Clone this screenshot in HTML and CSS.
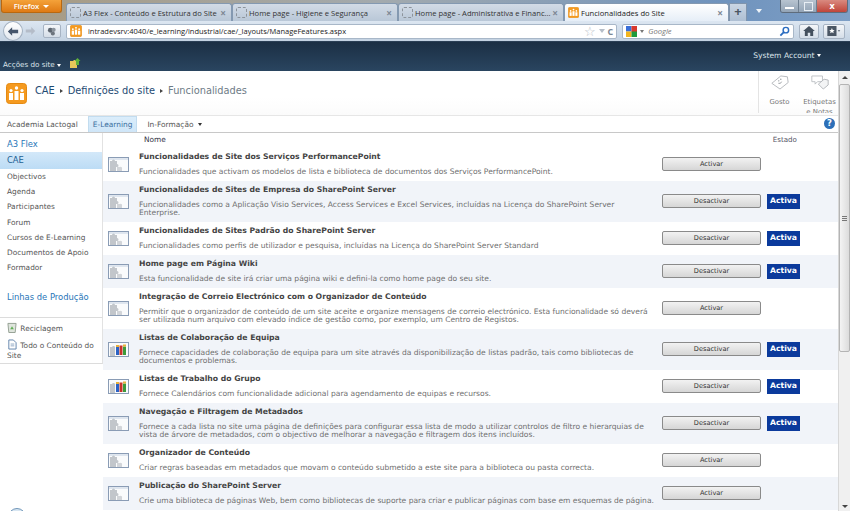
FILE: index.html
```html
<!DOCTYPE html>
<html lang="pt">

<head>
    <meta charset="UTF-8">
    <title>Funcionalidades do Site</title>
    <link rel="stylesheet" href="styles.css">
</head>

<body>
    <svg class="defs" width="0" height="0">
        <symbol id="site-logo" viewBox="0 0 21 21">
            <rect x="0.5" y="0.5" width="20" height="20" rx="3" fill="#f59a1f" stroke="#e58a12" />
            <rect x="3" y="10" width="4" height="7" fill="#fff" />
            <rect x="8.5" y="8" width="4" height="9" fill="#fff" />
            <rect x="14" y="10" width="4" height="7" fill="#fff" />
            <circle cx="5" cy="7.5" r="1.6" fill="#fff" />
            <circle cx="10.5" cy="5" r="1.7" fill="#fff" />
            <circle cx="16" cy="7.5" r="1.6" fill="#fff" />
        </symbol>
        <symbol id="feat-puzzle" viewBox="0 0 21 15">
            <rect x="0.5" y="0.5" width="20" height="14" fill="#fafbfc" stroke="#8a9cb5" />
            <rect x="1" y="1" width="19" height="2" fill="#dfe6ef" />
            <path d="M2 4h2a1.500 1.500 0 0 1 3 0h2v3a1.500 1.500 0 0 1 0 3h-1v4H2z" fill="#c2c6cb" />
            <path d="M9 10h3a1.500 1.500 0 0 1 2 2v2H9z" fill="#d2d5d9" />
        </symbol>
        <symbol id="feat-team" viewBox="0 0 21 15">
            <rect x="0.5" y="0.5" width="20" height="14" fill="#fafbfc" stroke="#8a9cb5" />
            <path d="M2 5h2a1.500 1.500 0 0 1 3 1v8H2z" fill="#c2c6cb" />
            <rect x="8" y="5" width="3" height="8" fill="#2b62c4" />
            <rect x="11.5" y="3.500" width="3" height="9.500" fill="#c8322a" />
            <rect x="15" y="4.500" width="3" height="8.500" fill="#3c9a3a" />
            <rect x="8" y="3" width="3" height="2" fill="#e8b13a" />
            <rect x="15" y="2.500" width="3" height="2" fill="#e8b13a" />
        </symbol>
    </svg>

    <!-- barra do browser -->
    <header class="browser">
        <div class="tabstrip">
            <div class="ff-btn">Firefox <span class="caret"></span></div>
            <div class="tab"><span class="tab-ico"></span><span class="tab-txt">A3 Flex - Conteúdo e Estrutura do Site</span><span class="tab-x">×</span></div>
            <div class="tab"><span class="tab-ico"></span><span class="tab-txt">Home page - Higiene e Segurança</span><span class="tab-x">×</span></div>
            <div class="tab"><span class="tab-ico"></span><span class="tab-txt">Home page - Administrativa e Financ...</span><span class="tab-x">×</span></div>
            <div class="tab tab-on">
                <svg class="tab-logo"><use href="#site-logo" /></svg>
                <span class="tab-txt">Funcionalidades do Site</span><span class="tab-x">×</span>
            </div>
            <div class="tab-new">+</div>
            <span class="tab-list"></span>
            <div class="win-btns">
                <span class="win-min"></span>
                <span class="win-max"></span>
                <span class="win-close">x</span>
            </div>
        </div>
        <div class="toolbar">
            <div class="back">
                <svg width="12" height="11" viewBox="0 0 14 12"><path d="M1 6l5-5v3h7v4H6v3z" fill="#46566c" /></svg>
            </div>
            <svg class="forward" width="11" height="10" viewBox="0 0 14 12"><path d="M13 6L8 1v3H1v4h7v3z" fill="#b4bcc8" /></svg>
            <div class="plugin-btn">
                <svg width="10" height="9" viewBox="0 0 12 11"><circle cx="4" cy="4" r="3" fill="#5d6670" /><circle cx="8" cy="3.500" r="2.500" fill="#8b939c" /><circle cx="7" cy="8" r="2.500" fill="#6d757e" /></svg>
            </div>
            <div class="urlbar">
                <svg class="url-logo"><use href="#site-logo" /></svg>
                <span class="url-txt">intradevsrv:4040/e_learning/industrial/cae/_layouts/ManageFeatures.aspx</span>
                <span class="url-star">☆</span>
                <span class="url-drop"></span>
                <span class="url-reload">C</span>
            </div>
            <div class="searchbar">
                <svg width="11" height="11" viewBox="0 0 12 12">
                    <rect width="6" height="6" fill="#3a6fd8" />
                    <rect x="6" width="6" height="7" fill="#d8382c" />
                    <rect y="6" width="6" height="6" fill="#f2b51e" />
                    <rect x="6" y="6" width="6" height="6" fill="#1c9a3c" />
                </svg>
                <span class="search-drop"></span>
                <span class="search-txt">Google</span>
                <svg width="11" height="11" viewBox="0 0 12 12"><circle cx="7.5" cy="4.500" r="3" fill="none" stroke="#2a6cc0" stroke-width="1.600" /><path d="M5.500 6.500L1.500 10.500" stroke="#2a6cc0" stroke-width="2" /></svg>
            </div>
            <div class="tool-btn">
                <svg width="12" height="10" viewBox="0 0 14 12"><path d="M7 0L0 6h2v6h3.500V8h3v4H12V6h2z" fill="#44505e" /></svg>
            </div>
            <div class="tool-btn tool-wide">
                <svg width="14" height="10" viewBox="0 0 16 12"><rect width="11" height="12" fill="#4a5664" /><path d="M5.500 2.500l1 2.200 2.300.2-1.700 1.500.5 2.300-2.100-1.200-2.100 1.200.5-2.300-1.700-1.500 2.300-.2z" fill="#fff" /><path d="M12.500 5h3L14 7z" fill="#4a5664" /></svg>
            </div>
        </div>
    </header>

    <div class="topbar">
        <div class="site-actions">Acções do site <span class="caret caret-sm"></span>
            <svg class="folder-up" width="11" height="10" viewBox="0 0 11 10"><path d="M0 3h3l1-1h3v8H0z" fill="#e8c75a" /><path d="M6 7V3H4.500L7.500 0l3 3H9v4z" fill="#5fb13c" /></svg>
        </div>
        <div class="account">System Account <span class="caret caret-sm"></span></div>
    </div>

    <div class="page">
        <div class="page-body">
            <div class="title-area">
                <svg class="logo"><use href="#site-logo" /></svg>
                <div class="crumbs">
                    <a>CAE</a><span class="sep"></span><a>Definições do site</a><span class="sep"></span><span class="crumb-now">Funcionalidades</span>
                </div>
                <div class="social">
                    <div class="social-item">
                        <svg width="18" height="17" viewBox="0 0 22 18"><path d="M1 10L12 1l8 1 1 7-10 8z" fill="#fff" stroke="#a9adb2" /><path d="M9 10q3 1 4-2" fill="none" stroke="#8a8f94" /><circle cx="9.5" cy="7" r=".8" fill="#8a8f94" /><circle cx="12" cy="5" r=".8" fill="#8a8f94" /></svg>
                        <span>Gosto</span>
                    </div>
                    <div class="social-item item-wide">
                        <svg width="18" height="17" viewBox="0 0 22 18"><path d="M1 1h13v7H8l-3 3V8H1z" fill="#fff" stroke="#b4b8bd" /><path d="M9 11l7-6 5 1v6l-6 5z" fill="#f3f4f5" stroke="#a9adb2" /></svg>
                        <span>Etiquetas e Notas</span>
                    </div>
                </div>
            </div>

            <nav class="topnav">
                <a>Academia Lactogal</a>
                <a class="topnav-on">E-Learning</a>
                <a>In-Formação <span class="caret caret-dark"></span></a>
                <span class="help">?</span>
            </nav>

            <div class="columns">
                <aside class="quick">
                    <div class="quick-main">
                        <a class="quick-head">A3 Flex</a>
                        <a class="quick-on">CAE</a>
                        <a class="quick-link">Objectivos</a>
                        <a class="quick-link">Agenda</a>
                        <a class="quick-link">Participantes</a>
                        <a class="quick-link">Forum</a>
                        <a class="quick-link">Cursos de E-Learning</a>
                        <a class="quick-link">Documentos de Apoio</a>
                        <a class="quick-link">Formador</a>
                        <a class="quick-head quick-head2">Linhas de Produção</a>
                    </div>
                    <div class="quick-extra">
                        <a>
                            <svg width="10" height="11" viewBox="0 0 11 11"><path d="M1 1h9l-1 10H2z" fill="#dfe5dd" stroke="#8f9c8e" /><path d="M5.500 4l2 3.500h-4z" fill="#5fae55" /></svg>
                            Reciclagem
                        </a>
                        <a>
                            <svg width="10" height="11" viewBox="0 0 11 11"><path d="M2 .5h5l3 3v7H2z" fill="#fff" stroke="#5a7ea8" /><path d="M4 5h4M4 7h4" stroke="#8aa3c0" /></svg>
                            Todo o Conteúdo do Site
                        </a>
                    </div>
                    <div class="quick-badge"></div>
                </aside>

                <main class="features">
                    <div class="feat-head">
                        <span class="head-name">Nome</span>
                        <span class="head-state">Estado</span>
                    </div>

                    <div class="feat">
                        <svg class="feat-ico"><use href="#feat-puzzle" /></svg>
                        <div class="feat-txt">
                            <h4>Funcionalidades de Site dos Serviços PerformancePoint</h4>
                            <p>Funcionalidades que activam os modelos de lista e biblioteca de documentos dos Serviços PerformancePoint.</p>
                        </div>
                        <button class="feat-btn">Activar</button>
                    </div>

                    <div class="feat alt">
                        <svg class="feat-ico"><use href="#feat-puzzle" /></svg>
                        <div class="feat-txt">
                            <h4>Funcionalidades de Sites de Empresa do SharePoint Server</h4>
                            <p>Funcionalidades como a Aplicação Visio Services, Access Services e Excel Services, incluídas na Licença do SharePoint Server Enterprise.</p>
                        </div>
                        <button class="feat-btn">Desactivar</button>
                        <span class="badge">Activa</span>
                    </div>

                    <div class="feat">
                        <svg class="feat-ico"><use href="#feat-puzzle" /></svg>
                        <div class="feat-txt">
                            <h4>Funcionalidades de Sites Padrão do SharePoint Server</h4>
                            <p>Funcionalidades como perfis de utilizador e pesquisa, incluídas na Licença do SharePoint Server Standard</p>
                        </div>
                        <button class="feat-btn">Desactivar</button>
                        <span class="badge">Activa</span>
                    </div>

                    <div class="feat alt">
                        <svg class="feat-ico"><use href="#feat-puzzle" /></svg>
                        <div class="feat-txt">
                            <h4>Home page em Página Wiki</h4>
                            <p>Esta funcionalidade de site irá criar uma página wiki e defini-la como home page do seu site.</p>
                        </div>
                        <button class="feat-btn">Desactivar</button>
                        <span class="badge">Activa</span>
                    </div>

                    <div class="feat">
                        <svg class="feat-ico"><use href="#feat-puzzle" /></svg>
                        <div class="feat-txt">
                            <h4>Integração de Correio Electrónico com o Organizador de Conteúdo</h4>
                            <p>Permitir que o organizador de conteúdo de um site aceite e organize mensagens de correio electrónico. Esta funcionalidade só deverá ser utilizada num arquivo com elevado índice de gestão como, por exemplo, um Centro de Registos.</p>
                        </div>
                        <button class="feat-btn">Activar</button>
                    </div>

                    <div class="feat alt">
                        <svg class="feat-ico"><use href="#feat-team" /></svg>
                        <div class="feat-txt">
                            <h4>Listas de Colaboração de Equipa</h4>
                            <p>Fornece capacidades de colaboração de equipa para um site através da disponibilização de listas padrão, tais como bibliotecas de documentos e problemas.</p>
                        </div>
                        <button class="feat-btn">Desactivar</button>
                        <span class="badge">Activa</span>
                    </div>

                    <div class="feat">
                        <svg class="feat-ico"><use href="#feat-team" /></svg>
                        <div class="feat-txt">
                            <h4>Listas de Trabalho do Grupo</h4>
                            <p>Fornece Calendários com funcionalidade adicional para agendamento de equipas e recursos.</p>
                        </div>
                        <button class="feat-btn">Desactivar</button>
                        <span class="badge">Activa</span>
                    </div>

                    <div class="feat alt">
                        <svg class="feat-ico"><use href="#feat-puzzle" /></svg>
                        <div class="feat-txt">
                            <h4>Navegação e Filtragem de Metadados</h4>
                            <p>Fornece a cada lista no site uma página de definições para configurar essa lista de modo a utilizar controlos de filtro e hierarquias de vista de árvore de metadados, com o objectivo de melhorar a navegação e filtragem dos itens incluídos.</p>
                        </div>
                        <button class="feat-btn">Desactivar</button>
                        <span class="badge">Activa</span>
                    </div>

                    <div class="feat">
                        <svg class="feat-ico"><use href="#feat-puzzle" /></svg>
                        <div class="feat-txt">
                            <h4>Organizador de Conteúdo</h4>
                            <p>Criar regras baseadas em metadados que movam o conteúdo submetido a este site para a biblioteca ou pasta correcta.</p>
                        </div>
                        <button class="feat-btn">Activar</button>
                    </div>

                    <div class="feat alt">
                        <svg class="feat-ico"><use href="#feat-puzzle" /></svg>
                        <div class="feat-txt">
                            <h4>Publicação do SharePoint Server</h4>
                            <p>Crie uma biblioteca de páginas Web, bem como bibliotecas de suporte para criar e publicar páginas com base em esquemas de página.</p>
                        </div>
                        <button class="feat-btn">Activar</button>
                    </div>
                </main>
            </div>
        </div>

        <div class="scrollbar">
            <span class="scroll-up"></span>
            <div class="scroll-thumb"><span class="grip"></span></div>
            <span class="scroll-down"></span>
        </div>
    </div>
</body>

</html>
```

FILE: styles.css
```css
* {
    box-sizing: border-box;
}

html,
body {
    margin: 0;
    height: 511px;
    overflow: hidden;
}

body {
    display: flex;
    flex-direction: column;
    font-family: "DejaVu Sans", Verdana, sans-serif;
    font-size: 7.6px;
    color: #555;
    background: #fff;
}

.defs {
    display: block;
    height: 0;
}

.caret {
    display: inline-block;
    width: 0;
    height: 0;
    margin-left: 2px;
    border-left: 3px solid transparent;
    border-right: 3px solid transparent;
    border-top: 3px solid #fff;
    vertical-align: middle;
}

.caret-sm {
    margin-left: 0;
    border-left-width: 2.5px;
    border-right-width: 2.5px;
}

.caret-dark {
    border-left-width: 2px;
    border-right-width: 2px;
    border-top-color: #333;
}

/* barra do browser */
.browser {
    flex: none;
    height: 42px;
    background: #c4d4e6;
    font-family: "Open Sans", "Noto Sans", sans-serif;
}

.tabstrip {
    display: flex;
    align-items: flex-end;
    height: 21px;
    padding-left: 1px;
    background: linear-gradient(90deg, #a89a80 0, #a3aaae 45%, #6f93bd 85%, #7e9fc6 100%);
}

.ff-btn {
    align-self: flex-start;
    width: 61px;
    height: 13px;
    margin-right: 4px;
    background: linear-gradient(#f4a23a, #df7a14);
    border-radius: 0 0 3px 3px;
    border: 1px solid #b9680f;
    border-top: 0;
    color: #fff;
    font-size: 7.7px;
    font-weight: 600;
    line-height: 12px;
    text-align: center;
}

.tab {
    display: flex;
    align-items: center;
    width: 166px;
    height: 18px;
    padding: 0 5px 0 3px;
    background: linear-gradient(#d2dbe6, #b9c7d7);
    border: 1px solid #8499b1;
    border-bottom: 0;
    border-radius: 3px 3px 0 0;
    color: #333;
    font-size: 7.6px;
    white-space: nowrap;
}

.tab-on {
    width: 165px;
    background: linear-gradient(#fff, #e6eef7);
    color: #222;
}

.tab-ico {
    flex: none;
    width: 11px;
    height: 11px;
    margin-right: 2px;
    border: 1px dashed #8d949c;
    border-radius: 2px;
}

.tab-logo {
    flex: none;
    width: 11px;
    height: 11px;
    margin-right: 2px;
}

.tab-txt {
    flex: 1;
    overflow: hidden;
}

.tab-x {
    flex: none;
    color: #7d8894;
    font-size: 10px;
    font-weight: 700;
}

.tab-new {
    width: 18px;
    height: 18px;
    background: linear-gradient(#c9d5e3, #aebfd3);
    border: 1px solid #7f94ad;
    border-bottom: 0;
    color: #4b5663;
    font-size: 13px;
    font-weight: 700;
    line-height: 15px;
    text-align: center;
}

.tab-list {
    align-self: center;
    width: 0;
    height: 0;
    margin-left: 9px;
    border-left: 3px solid transparent;
    border-right: 3px solid transparent;
    border-top: 4px solid #eef3f8;
}

.win-btns {
    display: flex;
    align-self: flex-start;
    height: 13px;
    width: 68px;
    margin-left: auto;
    margin-right: 2px;
    border: 1px solid #5e6c7c;
    border-top: 0;
    border-radius: 0 0 3px 3px;
    overflow: hidden;
}

.win-min,
.win-max {
    width: 18px;
    background: linear-gradient(#b8c4d0, #93a4b6);
    border-right: 1px solid #6e7f90;
    position: relative;
}

.win-min::after {
    content: "";
    position: absolute;
    left: 4px;
    bottom: 3px;
    width: 9px;
    height: 2px;
    background: #fff;
}

.win-max::after {
    content: "";
    position: absolute;
    left: 5px;
    top: 2px;
    width: 7px;
    height: 7px;
    border: 1px solid #e8eef4;
}

.win-close {
    flex: 1;
    background: linear-gradient(#d98a80, #c0453a);
    color: #fff;
    font-size: 9px;
    font-weight: 700;
    line-height: 11px;
    text-align: center;
}

.toolbar {
    display: flex;
    align-items: center;
    height: 21px;
    padding: 0 5px 0 3px;
    background: linear-gradient(#dce6f1, #c3d2e2);
    border-bottom: 1px solid #2b3f55;
}

.back {
    display: flex;
    align-items: center;
    justify-content: center;
    width: 20px;
    height: 20px;
    margin-right: 2px;
    background: linear-gradient(#fff, #e2e8ef);
    border: 1px solid #a3b1c1;
    border-radius: 50%;
}

.forward {
    margin-right: 7px;
}

.plugin-btn {
    display: flex;
    align-items: center;
    justify-content: center;
    width: 18px;
    height: 14px;
    margin-right: 5px;
    background: linear-gradient(#f4f6f9, #d5dee8);
    border: 1px solid #a6b3c3;
    border-radius: 2px;
}

.urlbar,
.searchbar {
    display: flex;
    align-items: center;
    height: 15px;
    background: #fff;
    border: 1px solid #a8b7c8;
    border-radius: 2px;
}

.urlbar {
    width: 552px;
    margin-right: 5px;
}

.url-logo {
    flex: none;
    width: 12px;
    height: 12px;
    margin: 0 6px 0 3px;
}

.url-txt {
    flex: 1;
    color: #222;
    font-size: 7.5px;
}

.url-star {
    color: #b6bec8;
    font-size: 13px;
    line-height: 13px;
}

.url-drop {
    width: 0;
    height: 0;
    margin: 0 3px;
    border-left: 3px solid transparent;
    border-right: 3px solid transparent;
    border-top: 4px solid #b6bec8;
}

.url-reload {
    margin-right: 3px;
    color: #7b8794;
    font-size: 9px;
    font-weight: 700;
}

.searchbar {
    width: 172px;
    padding: 0 3px;
    margin-right: 5px;
}

.search-drop {
    width: 0;
    height: 0;
    margin: 0 4px 0 3px;
    border-left: 2px solid transparent;
    border-right: 2px solid transparent;
    border-top: 3px solid #777;
}

.search-txt {
    flex: 1;
    color: #777;
    font-size: 7.6px;
    font-style: italic;
}

.tool-btn {
    display: flex;
    align-items: center;
    justify-content: center;
    width: 20px;
    height: 15px;
    margin-right: 4px;
    background: linear-gradient(#f4f6f9, #d5dee8);
    border: 1px solid #a6b3c3;
    border-radius: 2px;
}

.tool-wide {
    width: 22px;
    margin-right: 0;
}

/* barra escura do SharePoint */
.topbar {
    flex: none;
    display: flex;
    justify-content: space-between;
    height: 29px;
    padding: 0 29px 0 3px;
    background: linear-gradient(#1b2f44, #2a4560);
    color: #dbe3ea;
    font-size: 7.2px;
}

.site-actions {
    align-self: flex-end;
    padding-bottom: 2px;
}

.folder-up {
    margin-left: 7px;
    vertical-align: -1px;
}

.account {
    padding-top: 9px;
    font-size: 7.6px;
}

.page {
    flex: 1;
    display: flex;
    min-height: 0;
}

.page-body {
    flex: 1;
    min-width: 0;
}

.title-area {
    display: flex;
    align-items: flex-start;
    height: 44px;
    padding: 12px 0 0 6px;
    background: linear-gradient(#fff, #fff 60%, #fbfbfb);
}

.logo {
    flex: none;
    width: 21px;
    height: 21px;
    margin-right: 8px;
}

.crumbs {
    display: flex;
    align-items: center;
    padding-top: 2px;
    font-size: 9.8px;
    color: #1e4a73;
}

.sep {
    width: 0;
    height: 0;
    margin: 0 5px;
    border-top: 2.5px solid transparent;
    border-bottom: 2.5px solid transparent;
    border-left: 3px solid #444;
}

.crumb-now {
    color: #6d7b86;
}

.social {
    display: flex;
    margin: -12px 0 0 auto;
    height: 42px;
    overflow: hidden;
}

.social-item {
    display: flex;
    flex-direction: column;
    align-items: center;
    padding-top: 3px;
    color: #777;
    font-size: 6.9px;
    line-height: 10px;
    text-align: center;
}

.social-item svg {
    flex: none;
    margin-bottom: 6px;
}

.social-item:first-child {
    width: 42px;
    margin-right: 1px;
    border-left: 1px solid #e4e4e4;
}

.item-wide {
    width: 37px;
}

.topnav {
    display: flex;
    align-items: center;
    position: relative;
    height: 18px;
    padding-left: 7px;
    border-top: 1px solid #e6e6e6;
    border-bottom: 1px solid #c8c8c8;
    font-size: 7.45px;
    color: #555;
    gap: 10px;
}

.topnav-on {
    align-self: stretch;
    padding: 3px 4px 0;
    background: linear-gradient(#dbedfb, #cfe6f8);
    border: 1px solid #c2dcef;
    border-bottom: 0;
    color: #3b6f9e;
}

.help {
    position: absolute;
    right: 3px;
    top: 2px;
    width: 11px;
    height: 11px;
    background: #2c6fb8;
    border-radius: 50%;
    color: #fff;
    font-size: 8.5px;
    font-weight: 700;
    line-height: 11px;
    text-align: center;
}

.columns {
    display: flex;
}

/* menu lateral */
.quick {
    flex: none;
    width: 103px;
    position: relative;
    font-size: 7.4px;
}

.quick-main {
    display: flex;
    flex-direction: column;
    height: 185px;
    padding-top: 4px;
    border-right: 1px solid #e2e2e2;
    border-bottom: 1px solid #dcdcdc;
}

.quick-main a {
    padding-left: 7px;
}

.quick-head {
    height: 15px;
    color: #1f75b8;
    font-size: 8.4px;
    line-height: 15px;
}

.quick-head2 {
    margin-top: 15px;
}

.quick-on {
    height: 17px;
    background: linear-gradient(#d3e8f9, #bcdcf5);
    color: #1b5f93;
    font-size: 8.4px;
    line-height: 17px;
}

.quick-link {
    height: 15.2px;
    color: #555;
    line-height: 15px;
}

.quick-extra {
    height: 46px;
    padding: 4px 2px 0 7px;
    border-right: 1px solid #e2e2e2;
    border-bottom: 1px solid #dcdcdc;
    color: #555;
    line-height: 10px;
}

.quick-extra a {
    display: block;
    margin-bottom: 5px;
}

.quick-extra svg {
    margin-right: 1px;
    vertical-align: -2px;
}

.quick-badge {
    position: absolute;
    left: 8px;
    top: 375px;
    width: 18px;
    height: 18px;
    background: #d8e6f2;
    border: 1px solid #6f95b8;
    border-radius: 50%;
}

/* lista de funcionalidades */
.features {
    flex: 1;
    min-width: 0;
}

.feat-head {
    display: flex;
    height: 14.6px;
    padding-left: 41px;
    color: #334;
    font-size: 7.4px;
    line-height: 13px;
}

.head-state {
    margin-left: 607px;
    color: #556;
    font-size: 7.1px;
}

.feat {
    display: flex;
    align-items: center;
    min-height: 33px;
    padding-left: 5px;
}

.alt {
    background: #f1f4f9;
}

.feat-ico {
    flex: none;
    width: 21px;
    height: 15px;
    margin-right: 10px;
}

.feat-txt {
    flex: none;
    align-self: flex-start;
    width: 523px;
    padding: 3.5px 7px 4px 0;
}

.feat-txt h4 {
    margin: 0 0 4.5px;
    color: #444;
    font-size: 7.7px;
    font-weight: 700;
    line-height: 12px;
}

.feat-txt p {
    margin: 0;
    color: #6e6e6e;
    font-size: 7.56px;
    line-height: 8.5px;
}

.feat-btn {
    flex: none;
    width: 99px;
    height: 14px;
    padding: 0;
    background: linear-gradient(#f2f2f2, #d6d6d6);
    border: 1px solid #8a8a8a;
    border-radius: 2px;
    color: #333;
    font-family: inherit;
    font-size: 6.6px;
    line-height: 12px;
}

.badge {
    flex: none;
    width: 33px;
    height: 15px;
    margin-left: 6px;
    background: #0b3a9c;
    color: #fff;
    font-size: 7.7px;
    font-weight: 700;
    line-height: 14px;
    text-align: center;
}

.scrollbar {
    flex: none;
    display: flex;
    flex-direction: column;
    align-items: center;
    width: 12px;
    height: 440px;
    padding-top: 5px;
    background: #f0f0f0;
    border-left: 1px solid #d8d8d8;
}

.scroll-up,
.scroll-down {
    flex: none;
    width: 0;
    height: 0;
    border-left: 3px solid transparent;
    border-right: 3px solid transparent;
}

.scroll-up {
    border-bottom: 3px solid #444;
}

.scroll-down {
    margin-top: auto;
    margin-bottom: 3px;
    border-top: 3px solid #444;
}

.scroll-thumb {
    display: flex;
    align-items: center;
    justify-content: center;
    width: 11px;
    height: 268px;
    margin-top: 5px;
    background: linear-gradient(90deg, #f4f4f4, #dcdcdc);
    border: 1px solid #b4b4b4;
    border-radius: 2px;
}

.grip {
    width: 5px;
    height: 5px;
    border-top: 1px solid #777;
    border-bottom: 1px solid #777;
    background: linear-gradient(#777, #777) center / 100% 1px no-repeat;
}
```
